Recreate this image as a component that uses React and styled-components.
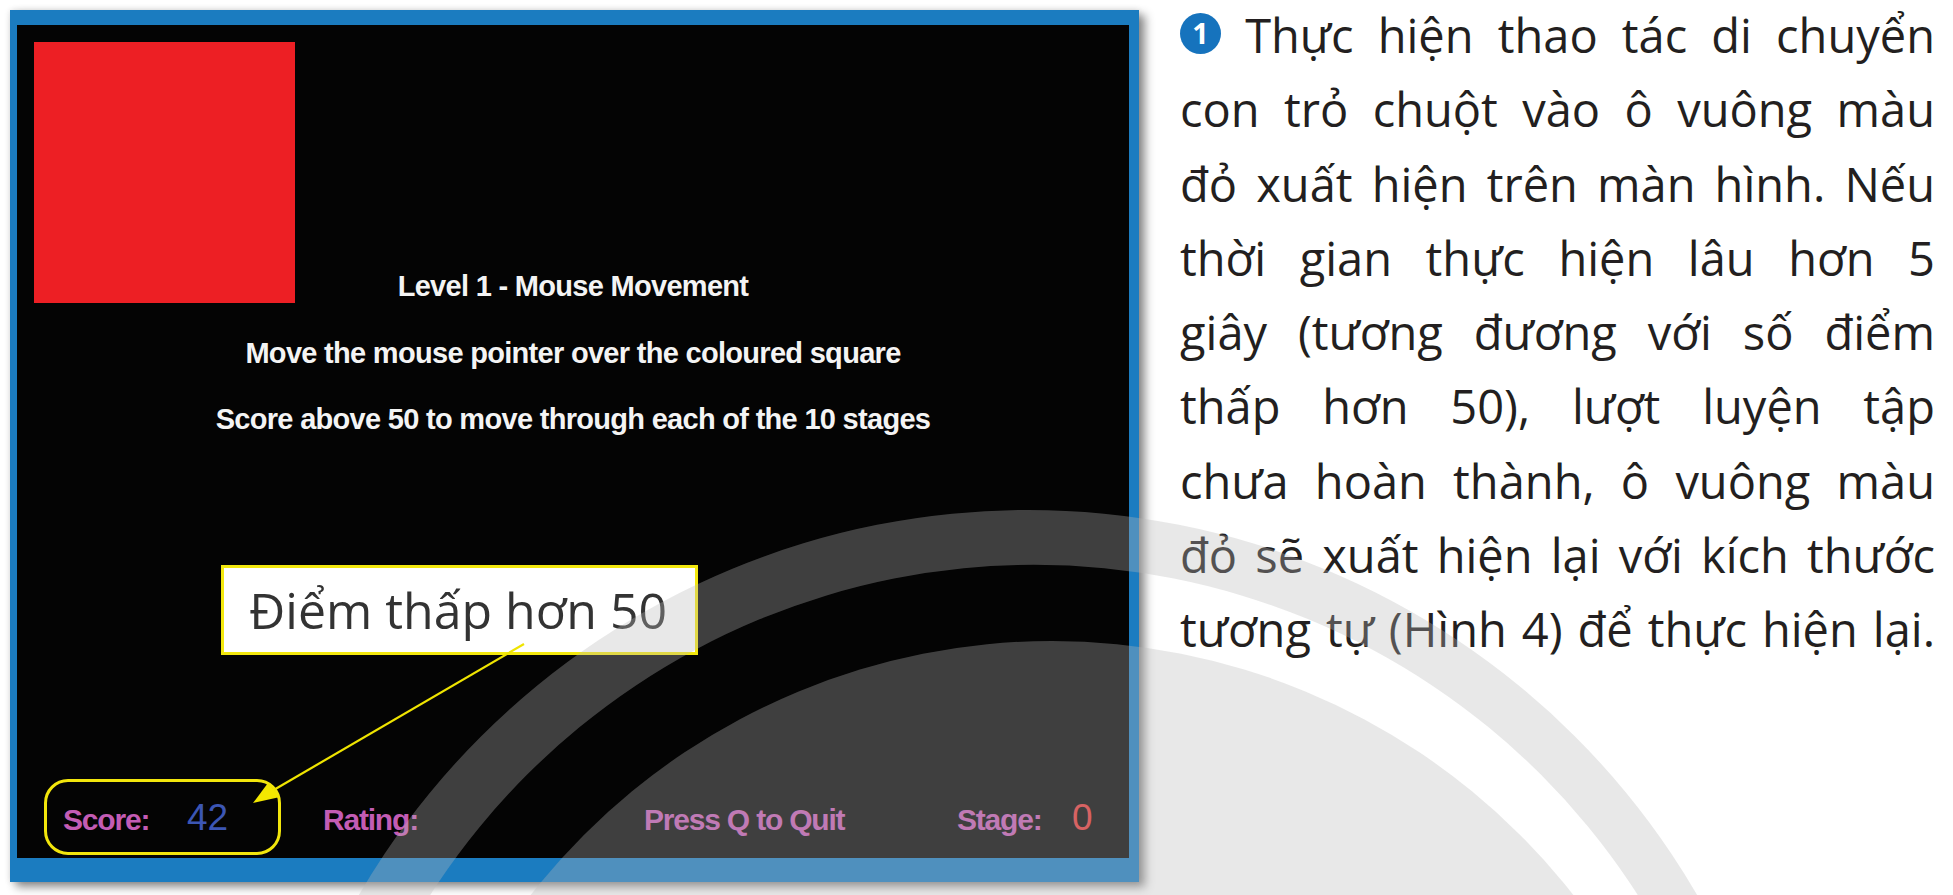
import React from 'react'
import styled, { createGlobalStyle } from 'styled-components'

const GlobalStyle = createGlobalStyle`
  html, body {
    margin: 0;
    padding: 0;
    background: #ffffff;
  }
`

const Page = styled.div`
  position: relative;
  width: 1953px;
  height: 895px;
  overflow: hidden;
  display: flex;
  align-items: flex-start;
  padding: 10px 0 0 10px;
  box-sizing: border-box;
  background: #ffffff;
`

const Frame = styled.div`
  position: relative;
  flex: none;
  border-style: solid;
  border-color: #1b7cc0;
  border-width: 15px 10px 24px 7px;
  box-shadow: 6px 5px 9px rgba(0, 0, 0, 0.45), 0 0 6px rgba(0, 0, 0, 0.12);
`

const Screen = styled.div`
  position: relative;
  width: 1112px;
  height: 833px;
  background: #040404;
  display: flex;
  flex-direction: column;
  font-family: "Liberation Sans", Arial, sans-serif;
`

const Target = styled.div`
  position: absolute;
  left: 17px;
  top: 17px;
  width: 261px;
  height: 261px;
  background: #ed1f24;
`

const Messages = styled.div`
  padding-top: 228px;
  display: flex;
  flex-direction: column;
  align-items: center;
`

const Message = styled.div`
  color: #f4f4f4;
  font-weight: 700;
  font-size: 29px;
  letter-spacing: -0.7px;
  line-height: 66.5px;
  white-space: nowrap;
`

const StatusBar = styled.div`
  margin-top: auto;
  margin-bottom: 3px;
  padding-left: 27px;
  display: grid;
  grid-template-columns: 279px 321px 313px 115px auto;
  align-items: baseline;
`

const ScoreBox = styled.div`
  box-sizing: border-box;
  width: 237px;
  height: 76px;
  border: 3px solid #f2e60c;
  border-radius: 24px;
  padding: 17px 0 0 16px;
  display: grid;
  grid-template-columns: 124px auto;
  align-items: baseline;
`

const Label = styled.span`
  color: #c35cb4;
  font-weight: 700;
  font-size: 30px;
  letter-spacing: -1.2px;
  line-height: 1;
  white-space: nowrap;
`

const Value = styled.span`
  color: ${(p) => p.$color};
  font-size: 37px;
  line-height: 1;
`

const Callout = styled.div`
  position: absolute;
  left: 204px;
  top: 540px;
  box-sizing: border-box;
  width: 477px;
  height: 90px;
  border: 3px solid #f3e80e;
  background: #ffffff;
  padding: 0 25px;
  font-family: "Open Sans", "Noto Sans", sans-serif;
  font-size: 50px;
  line-height: 84px;
  color: #333333;
  white-space: nowrap;
`

const Column = styled.div`
  flex: none;
  width: 755px;
  margin-left: 41px;
  margin-top: -12px;
  font-family: "Open Sans", "Noto Sans", sans-serif;
  font-size: 47px;
  line-height: 74.3px;
  color: #231f20;
`

const Line = styled.div`
  text-align: justify;
  text-align-last: justify;
`

const BulletSvg = styled.svg`
  display: inline-block;
  width: 41px;
  height: 41px;
  vertical-align: -1px;
`

const Bullet = ({ n }) => (
  <BulletSvg width="41" height="41" viewBox="0 0 40 40">
    <circle cx="20" cy="20" r="20" fill="#1673bd" />
    <text
      x="20"
      y="30"
      textAnchor="middle"
      fill="#ffffff"
      fontFamily="'Open Sans', 'Noto Sans', sans-serif"
      fontWeight="700"
      fontSize="28"
    >
      {n}
    </text>
  </BulletSvg>
)

const Layer = styled.svg`
  position: absolute;
  left: 0;
  top: 0;
  width: 1953px;
  height: 895px;
  pointer-events: none;
`

const Pointer = () => (
  <Layer viewBox="0 0 1953 895">
    <line x1="524" y1="644" x2="272" y2="791" stroke="#efe400" strokeWidth="2.2" />
    <polygon points="253,803 268,783 280,797" fill="#f3e800" />
  </Layer>
)

// big decorative swoosh laid over the whole page
const Swoosh = () => (
  <Layer viewBox="0 0 1953 895">
    <g fill="rgb(185,185,185)" fillOpacity="0.33">
      <circle cx="1052" cy="1303" r="662" />
      <path
        fillRule="evenodd"
        d="M 254 1284 A 774 774 0 1 0 1802 1284 A 774 774 0 1 0 254 1284 Z
           M 317 1282 A 717 717 0 1 0 1751 1282 A 717 717 0 1 0 317 1282 Z"
      />
    </g>
  </Layer>
)

const lines = [
  'con trỏ chuột vào ô vuông màu',
  'đỏ xuất hiện trên màn hình. Nếu',
  'thời gian thực hiện lâu hơn 5',
  'giây (tương đương với số điểm',
  'thấp hơn 50), lượt luyện tập',
  'chưa hoàn thành, ô vuông màu',
  'đỏ sẽ xuất hiện lại với kích thước',
  'tương tự (Hình 4) để thực hiện lại.',
]

export default function App() {
  return (
    <>
      <GlobalStyle />
      <Page>
        <Frame>
          <Screen>
            <Target />
            <Messages>
              <Message>Level 1 - Mouse Movement</Message>
              <Message>Move the mouse pointer over the coloured square</Message>
              <Message>Score above 50 to move through each of the 10 stages</Message>
            </Messages>
            <StatusBar>
              <ScoreBox>
                <Label>Score:</Label>
                <Value $color="#3c56b4">42</Value>
              </ScoreBox>
              <Label>Rating:</Label>
              <Label>Press Q to Quit</Label>
              <Label>Stage:</Label>
              <Value $color="#e6393a">0</Value>
            </StatusBar>
          </Screen>
          <Callout>Điểm thấp hơn 50</Callout>
        </Frame>
        <Column>
          <Line>
            <Bullet n="1" /> Thực hiện thao tác di chuyển
          </Line>
          {lines.map((t) => (
            <Line key={t}>{t}</Line>
          ))}
        </Column>
        <Pointer />
        <Swoosh />
      </Page>
    </>
  )
}
